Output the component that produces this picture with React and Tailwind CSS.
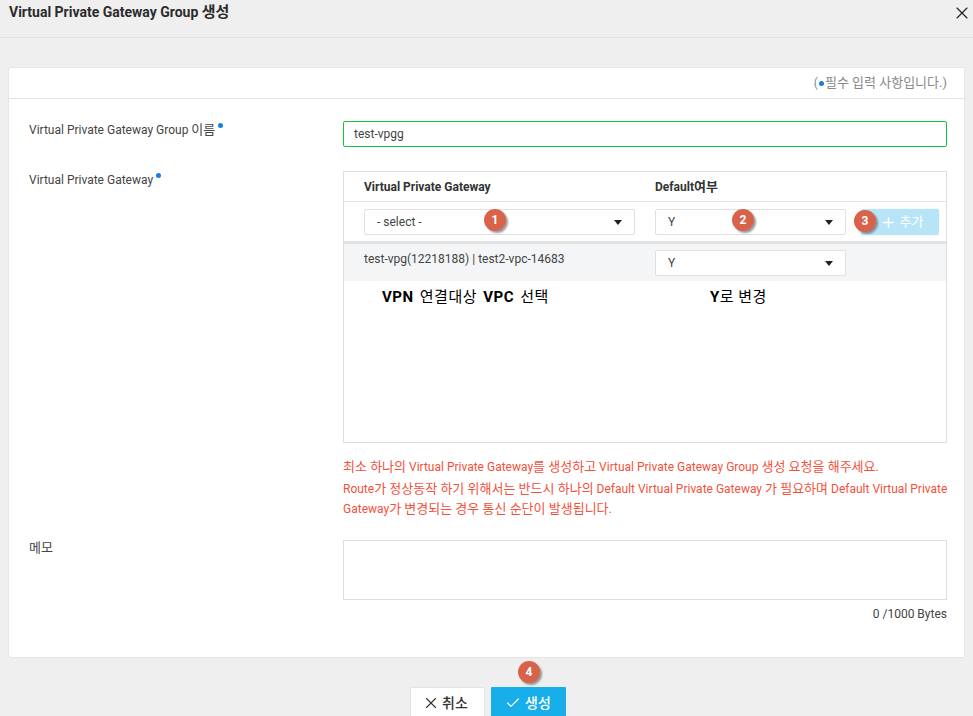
import { Check, Plus, X } from 'lucide-react';

const fontStack = { fontFamily: 'Roboto, "Noto Sans CJK KR", sans-serif' };

const Dot = () => <span className="inline-block size-[5px] rounded-full bg-[#1a7fd8]" />;

// korean runs are a bit wider than latin in the reference
const Ko = ({ children }) => <span className="text-[13px]">{children}</span>;

const Badge = ({ children, className }) => (
  <span className={`absolute flex size-[22px] items-center justify-center rounded-full bg-[#d9634a] text-[12px] font-bold text-white shadow-[2px_2px_2px_rgba(90,90,90,0.6)] ${className}`}>
    {children}
  </span>
);

const Select = ({ label, className }) => (
  <div className={`flex h-[26px] items-center justify-between rounded-[2px] border border-[#e0e0e0] bg-white pl-[12px] pr-[12px] text-[12px] text-[#444] ${className}`}>
    <span>{label}</span>
    <span className="h-0 w-0 border-x-[4px] border-t-[5px] border-x-transparent border-t-[#222]" />
  </div>
);

export default function App() {
  return (
    <div style={fontStack} className="h-[716px] overflow-hidden bg-[#efefef] text-[12px] text-[#444]">
      <header className="flex h-[38px] items-start justify-between border-b border-[#e2e2e2] pl-[9px] pr-px">
        <h1 className="mt-[3px] text-[14px] leading-[18px] font-bold text-[#2b2b2b]">Virtual Private Gateway Group <span className="text-[15px]">생성</span></h1>
        <X className="mt-[3px] size-[20px] text-[#222]" strokeWidth={1.4} />
      </header>

      <main className="mx-[8px] mt-[29px] h-[591px] rounded-[3px] border border-[#e6e6e6] bg-white">
        <div className="flex h-[31px] items-center justify-end gap-px border-b border-[#e2e2e2] pr-[17px] text-[#888]">
          <span>(</span>
          <Dot />
          <Ko>필수 입력 사항입니다.)</Ko>
        </div>

        <div className="flex pl-[20px] pr-[17px] pt-[22px]">
          <div className="w-[314px] shrink-0 leading-[18px]">
            <span>Virtual Private Gateway Group <Ko>이름</Ko></span>
            <span className="relative -top-[6px] ml-[3px]"><Dot /></span>
          </div>
          <div className="flex h-[26px] flex-1 items-center rounded-[2px] border border-[#10c53c] pl-[10px] text-[#444]">test-vpgg</div>
        </div>

        <div className="mt-[24px] flex pl-[20px] pr-[17px]">
          <div className="w-[314px] shrink-0 leading-[18px]">
            <span>Virtual Private Gateway</span>
            <span className="relative -top-[6px] ml-[3px]"><Dot /></span>
          </div>
          <div className="flex-1">
            <div className="h-[272px] border border-[#dedede]">
              <div className="flex h-[30px] items-center border-b border-[#e4e4e4] pl-[20px] font-bold text-[#333]">
                <span className="w-[291px]">Virtual Private Gateway</span>
                <span>Default<Ko>여부</Ko></span>
              </div>
              <div className="relative flex h-[42px] items-start border-b-[3px] border-[#e2e2e2] pl-[20px] pt-[7px]">
                <Select label="- select -" className="w-[271px]" />
                <Select label="Y" className="ml-[20px] w-[191px]" />
                <button className="ml-[15px] flex h-[26px] w-[78px] items-center justify-center gap-[3px] rounded-[2px] bg-[#b8e4f8] pl-[3px] text-[13px] text-white shadow-[0_0_2px_#d5effb]">
                  <Plus className="size-[17px]" strokeWidth={2} />
                  추가
                </button>
                <Badge className="left-[140px] top-[7px]">1</Badge>
                <Badge className="left-[388px] top-[7px]">2</Badge>
                <Badge className="left-[510px] top-[8px]">3</Badge>
              </div>
              <div className="flex h-[37px] items-start bg-[#f4f5f7] pl-[20px] pt-[6px]">
                <span className="w-[291px] leading-[18px]">test-vpg(12218188) | test2-vpc-14683</span>
                <Select label="Y" className="w-[191px]" />
              </div>
              <div className="flex pt-[6px] text-[15px] leading-[20px] tracking-[0.5px] text-black">
                <span className="ml-[38px] w-[328px] [word-spacing:2px]"><b>VPN</b> 연결대상 <b>VPC</b> 선택</span>
                <span><b>Y</b>로 변경</span>
              </div>
            </div>
            <div className="mt-[14px] -mr-[2px] text-[#f4513c]">
              <p className="leading-[20px]"><Ko>최소 하나의</Ko> Virtual Private Gateway<Ko>를 생성하고</Ko> Virtual Private Gateway Group <Ko>생성 요청을 해주세요.</Ko></p>
              <p className="mt-[2px] leading-[20px]">Route<Ko>가 정상동작 하기 위해서는 반드시 하나의</Ko> Default Virtual Private Gateway <Ko>가 필요하며</Ko> Default Virtual Private Gateway<Ko>가 변경되는 경우 통신 순단이 발생됩니다.</Ko></p>
            </div>
          </div>
        </div>

        <div className="mt-[21px] flex pl-[20px] pr-[17px]">
          <div className="w-[314px] shrink-0 leading-[16px]"><Ko>메모</Ko></div>
          <div className="flex-1">
            <div className="h-[60px] border border-[#dedede]" />
            <p className="mt-[6px] text-right leading-[16px]">0 /1000 Bytes</p>
          </div>
        </div>
      </main>

      <footer className="relative mt-[29px] flex justify-center gap-[6px] pl-[2px]">
        <button className="flex h-[32px] w-[75px] items-center justify-center gap-[2px] rounded-[1px] border border-[#e4e4e4] bg-white pr-[4px] text-[14px] font-medium text-[#333]">
          <X className="size-[18px]" strokeWidth={1.5} />
          취소
        </button>
        <button className="flex h-[32px] w-[75px] items-center justify-center gap-[4px] rounded-[1px] bg-[#18aeea] text-[14px] font-medium text-white">
          <Check className="size-[16px]" strokeWidth={1.8} />
          생성
        </button>
        <Badge className="left-[518px] -top-[26px]">4</Badge>
      </footer>
    </div>
  );
}
